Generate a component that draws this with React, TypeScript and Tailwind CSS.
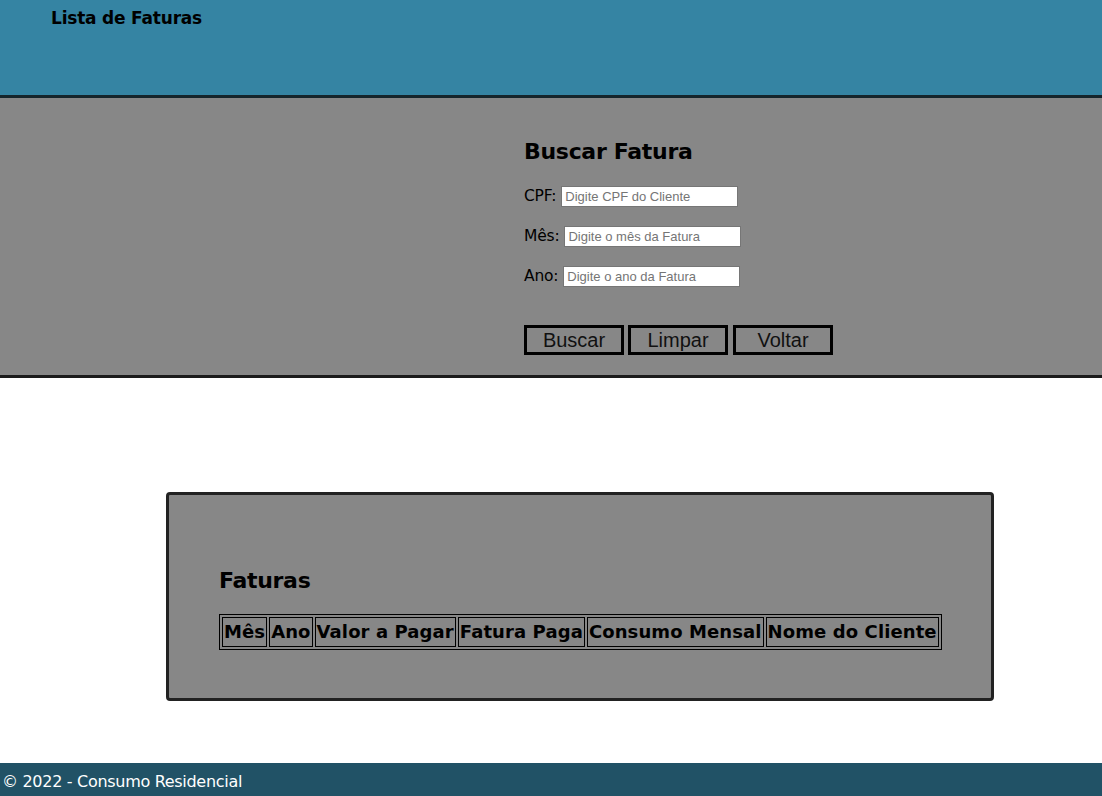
export default function App() {
  const cols = ["Mês", "Ano", "Valor a Pagar", "Fatura Paga", "Consumo Mensal", "Nome do Cliente"];
  const fields = [
    { label: "CPF:", placeholder: "Digite CPF do Cliente" },
    { label: "Mês:", placeholder: "Digite o mês da Fatura" },
    { label: "Ano:", placeholder: "Digite o ano da Fatura" },
  ];

  return (
    <div className="min-h-[796px] flex flex-col bg-white font-['DejaVu_Sans',sans-serif] text-black">
      {/* Header */}
      <header className="h-[98px] bg-[#3584a3] border-b-[3px] border-[#15252b] pl-[51px] pt-[6px]">
        <h1 className="text-[17px] font-bold leading-[24px] tracking-[-0.2px]">Lista de Faturas</h1>
      </header>

      {/* Search */}
      <section className="h-[280px] bg-[#878787] border-b-[3px] border-[#1b1b1b] pl-[524px] pt-[39px]">
        <h2 className="text-[22px] font-bold leading-[30px] tracking-[-0.3px]">Buscar Fatura</h2>
        <div className="mt-[19px] flex flex-col gap-[19px]">
          {fields.map((f) => (
            <div key={f.label} className="flex items-center h-[21px]">
              <label className="text-[15.5px] leading-[21px] mr-[5px] tracking-[-0.2px]">{f.label}</label>
              <input
                className="w-[177px] h-[21px] bg-white border border-[#767676] px-[3px] text-[13px] font-['Liberation_Sans',sans-serif] placeholder:text-[#757575] outline-none"
                placeholder={f.placeholder}
              />
            </div>
          ))}
        </div>
        <div className="mt-[38px] flex gap-[4px] font-['Liberation_Sans',sans-serif]">
          {["Buscar", "Limpar", "Voltar"].map((b, i) => (
            <button
              key={b}
              className={`w-[100px] h-[30px] border-[3px] border-black bg-[#878787] text-[20px] leading-[24px] text-[#111] ${i === 2 ? "ml-[1px]" : ""}`}
            >
              {b}
            </button>
          ))}
        </div>
      </section>

      {/* Results */}
      <main className="flex-1 pt-[114px]">
        <div className="ml-[166px] w-[828px] h-[209px] bg-[#878787] border-[3px] border-[#222] rounded-[4px] pl-[50px] pt-[71px]">
          <h2 className="text-[22px] font-bold leading-[30px] tracking-[-0.3px]">Faturas</h2>
          <table className="mt-[18px] border border-black border-separate border-spacing-[2px]">
            <thead>
              <tr>
                {cols.map((c) => (
                  <th key={c} className="border border-black px-[1px] py-[1px] text-[18px] font-bold leading-[26px] tracking-[0.1px] whitespace-nowrap">
                    {c}
                  </th>
                ))}
              </tr>
            </thead>
          </table>
        </div>
      </main>

      {/* Footer */}
      <footer className="h-[33px] bg-[#215266] text-white pl-[2px] pt-[5px] flex items-center">
        <span className="text-[16px] tracking-[-0.3px]">© 2022 - Consumo Residencial</span>
      </footer>
    </div>
  );
}
